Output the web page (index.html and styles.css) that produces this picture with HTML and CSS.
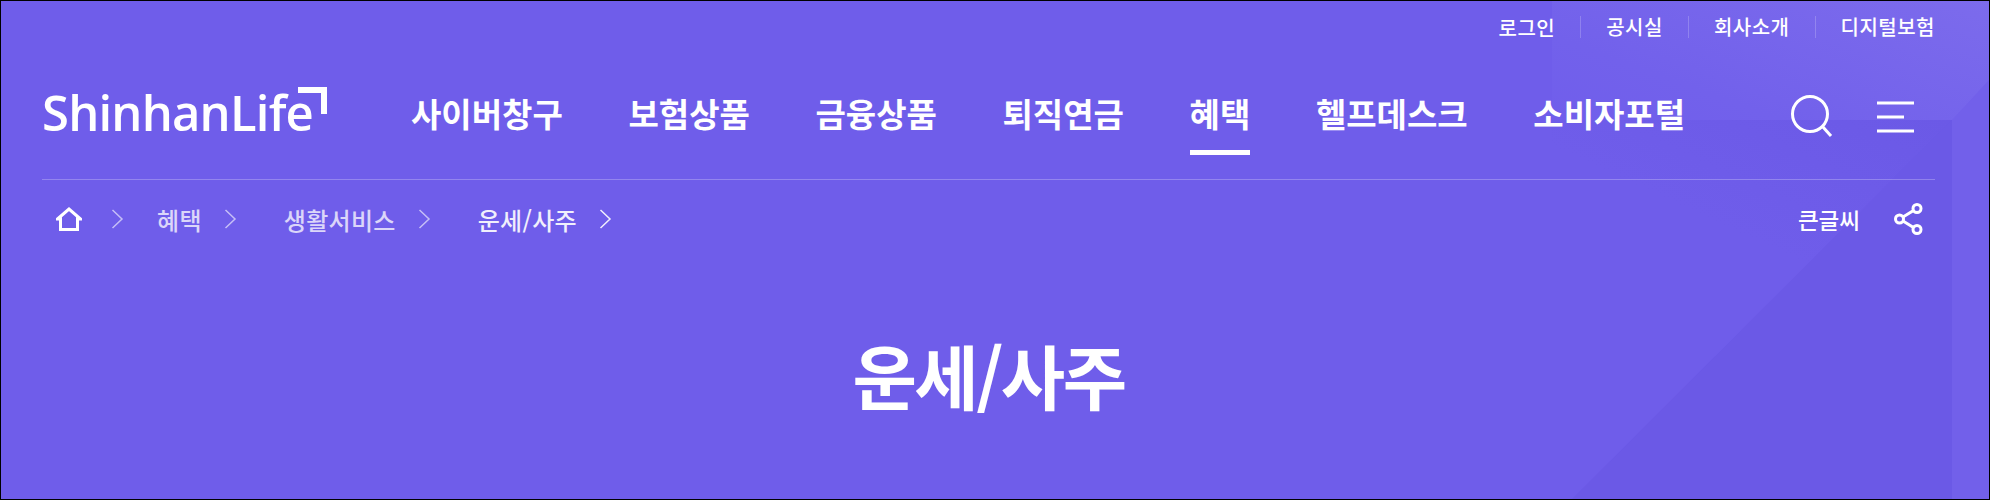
FILE: index.html
```html
<!DOCTYPE html>
<html lang="ko">

<head>
    <meta charset="UTF-8">
    <meta name="viewport" content="width=device-width, initial-scale=1.0">
    <title>운세/사주</title>
    <link rel="stylesheet" href="styles.css">
</head>

<body>

    <div class="page">
        <div class="deco deco-top"></div>
        <div class="deco deco-mid"></div>
        <div class="deco deco-low"></div>
        <div class="deco deco-edge"></div>

        <div class="util">
            <a>로그인</a>
            <a>공시실</a>
            <a>회사소개</a>
            <a>디지털보험</a>
        </div>

        <div class="gnb">
            <div class="logo">ShinhanLife<span class="logo-mark"></span></div>
            <div class="menu">
                <a>사이버창구</a>
                <a>보험상품</a>
                <a>금융상품</a>
                <a>퇴직연금</a>
                <a class="on">혜택</a>
                <a>헬프데스크</a>
                <a>소비자포털</a>
            </div>
            <div class="gnb-icons">
                <svg class="icon-search" width="44" height="42" viewBox="0 0 44 42" fill="none" stroke="#fff" stroke-width="3">
                    <circle cx="20" cy="19" r="17.5"/>
                    <path d="M32.500 31.500 L41 41"/>
                </svg>
                <svg class="icon-menu" width="38" height="32" viewBox="0 0 38 32" fill="none" stroke="#fff" stroke-width="3">
                    <path d="M0 2 H37 M0 16 H27 M0 30 H37"/>
                </svg>
            </div>
        </div>

        <div class="crumbs">
            <div class="path">
                <svg class="icon-home" width="26" height="24" viewBox="0 0 26 24" fill="none" stroke="#fff" stroke-width="3">
                    <path d="M1.500 12 L13 2 L24.500 12 H21.500 V22.500 H4.500 V12 Z"/>
                </svg>
                <svg class="chev chev-first" width="13" height="20" viewBox="0 0 13 20" fill="none" stroke="#fff" stroke-width="1.500">
                    <path d="M1.500 1 L11 10 L1.500 19"/>
                </svg>
                <a>혜택</a>
                <svg class="chev" width="13" height="20" viewBox="0 0 13 20" fill="none" stroke="#fff" stroke-width="1.500">
                    <path d="M1.500 1 L11 10 L1.500 19"/>
                </svg>
                <a>생활서비스</a>
                <svg class="chev" width="13" height="20" viewBox="0 0 13 20" fill="none" stroke="#fff" stroke-width="1.500">
                    <path d="M1.500 1 L11 10 L1.500 19"/>
                </svg>
                <a class="now">운세/사주</a>
                <svg class="chev chev-now" width="13" height="20" viewBox="0 0 13 20" fill="none" stroke="#fff" stroke-width="1.500">
                    <path d="M1.500 1 L11 10 L1.500 19"/>
                </svg>
            </div>
            <div class="tools">
                <a>큰글씨</a>
                <svg class="icon-share" width="29" height="32" viewBox="0 0 29 32" fill="none" stroke="#fff" stroke-width="3">
                    <circle cx="23" cy="5.500" r="4"/>
                    <circle cx="5.500" cy="16" r="4"/>
                    <circle cx="23" cy="26.500" r="4"/>
                    <path d="M9 14 L19.500 7.500 M9 18 L19.500 24.500"/>
                </svg>
            </div>
        </div>

        <h1 class="title">운세/사주</h1>
    </div>

</body>

</html>
```

FILE: styles.css
```css
body {
    margin: 0;
    font-family: "Noto Sans CJK KR", "Noto Sans", sans-serif;
    background: #6f5dea;
    color: white;
}

html, body {
    overflow: hidden;
}

a {
    color: inherit;
    text-decoration: none;
}

.page {
    position: relative;
    box-sizing: border-box;
    height: 500px;
    border: 1px solid #000;
    padding: 0 54px 0 41px;
    background: #6f5dea;
    overflow: hidden;
}

/* Background shapes */
.deco {
    position: absolute;
}

.deco-top {
    top: 0;
    right: 0;
    width: 437px;
    height: 119px;
    background: linear-gradient(200deg, #7c6bec, #7261eb 70%, #705eeb);
}

.deco-mid {
    top: 119px;
    right: 37px;
    width: 400px;
    height: 200px;
    background: linear-gradient(205deg, #6b59e6 0%, rgba(107, 89, 230, 0) 55%);
}

.deco-low {
    top: 119px;
    right: 37px;
    width: 380px;
    height: 379px;
    background: #6b59e6;
    clip-path: polygon(100% 0, 100% 100%, 0 100%);
}

.deco-edge {
    top: 79px;
    right: 0;
    width: 37px;
    height: 419px;
    background: #7260ea;
    clip-path: polygon(100% 0, 100% 100%, 0 100%, 0 40px);
}

/* Top links */
.util {
    position: relative;
    display: flex;
    justify-content: flex-end;
    align-items: center;
    height: 52px;
    font-size: 20px;
    font-weight: 500;
    letter-spacing: 0.5px;
}

.util a + a {
    margin-left: 25px;
    padding-left: 25px;
    border-left: 1px solid rgba(255, 255, 255, 0.2);
    line-height: 22px;
}

/* Main nav */
.gnb {
    position: relative;
    display: flex;
    align-items: flex-start;
    height: 126px;
    border-bottom: 1px solid rgba(255, 255, 255, 0.25);
}

.logo {
    position: relative;
    width: 369px;
    padding-top: 27px;
    font-family: "Open Sans", sans-serif;
    font-size: 49px;
    font-weight: 600;
    line-height: 64px;
    letter-spacing: -0.8px;
}

.logo-mark {
    position: absolute;
    left: 256px;
    top: 34px;
    width: 23px;
    height: 21px;
    border-top: 6px solid white;
    border-right: 6px solid white;
}

.menu {
    display: flex;
    gap: 65.6px;
    font-size: 33px;
    font-weight: 700;
}

.menu a {
    height: 60px;
    padding-top: 37px;
    line-height: 47px;
}

.menu a.on {
    border-bottom: 5px solid white;
}

.gnb-icons {
    display: flex;
    align-items: flex-start;
    gap: 43px;
    margin-left: auto;
    padding-top: 42px;
    padding-right: 20px;
}

.icon-menu {
    margin-top: 6px;
}

/* Breadcrumb */
.crumbs {
    position: relative;
    display: flex;
    justify-content: space-between;
    align-items: center;
    height: 78px;
    font-size: 24px;
    font-weight: 500;
}

.path {
    display: flex;
    align-items: center;
    padding-left: 14px;
    letter-spacing: 0.3px;
}

.path a {
    opacity: 0.75;
}

.path a.now {
    opacity: 0.9;
}

.chev {
    opacity: 0.6;
    margin: 0 47px 0 22px;
}

.chev-first {
    margin-left: 29px;
    margin-right: 33px;
}

.chev-now {
    opacity: 0.9;
}

.tools {
    display: flex;
    align-items: center;
    gap: 34px;
    padding-right: 12px;
    font-size: 22.5px;
}

.title {
    position: relative;
    margin: 65px 0 0;
    text-align: center;
    font-size: 70px;
    font-weight: 700;
    line-height: 104px;
    letter-spacing: -2.6px;
}
```
